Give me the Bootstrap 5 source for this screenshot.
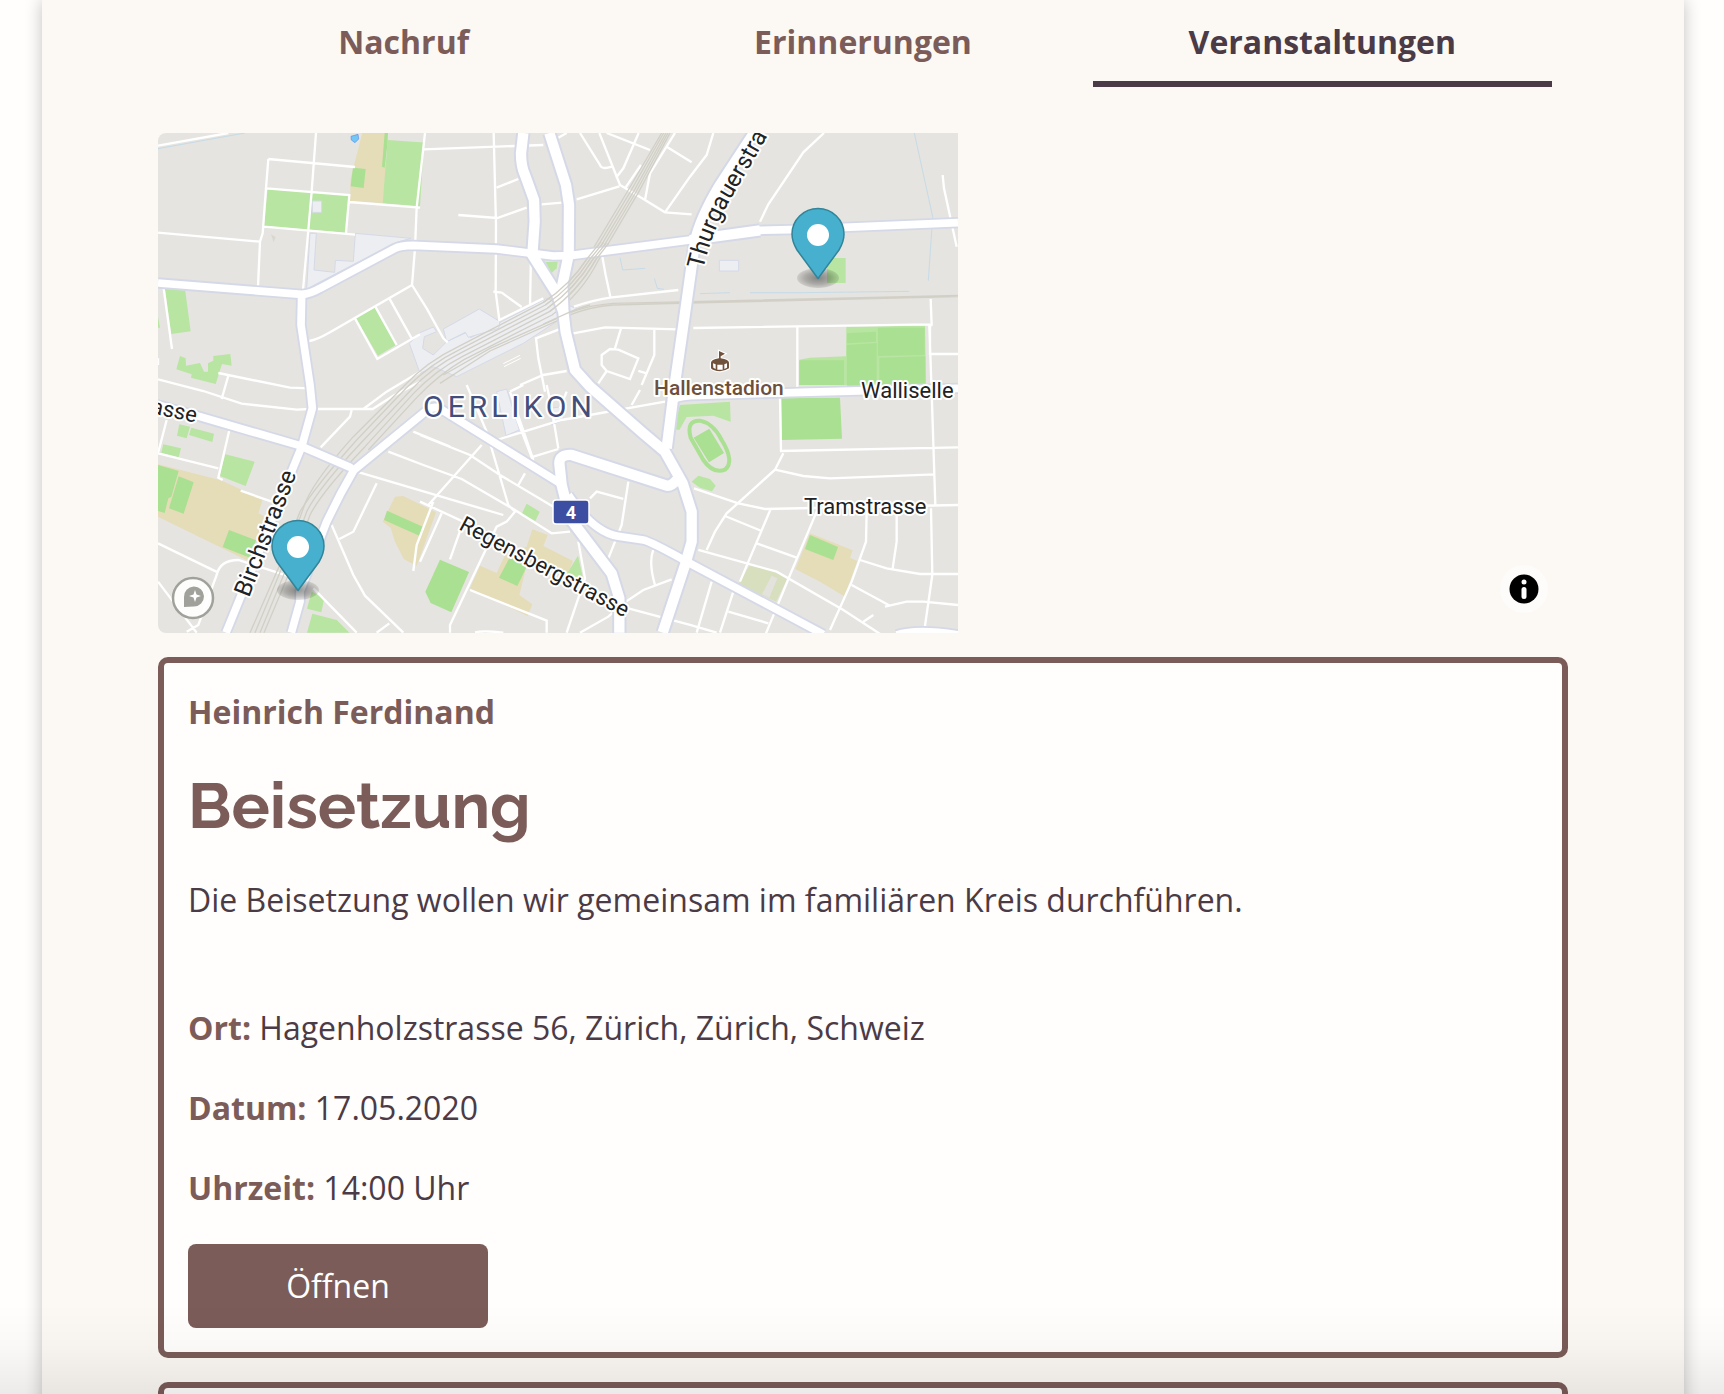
<!DOCTYPE html>
<html lang="de">
<head>
<meta charset="utf-8">
<meta name="viewport" content="width=device-width, initial-scale=1">
<title>Veranstaltungen</title>
<link rel="stylesheet" href="https://cdn.jsdelivr.net/npm/bootstrap@5.3.0/dist/css/bootstrap.min.css">
<style>
  :root { --brand: #7b5c59; --ink: #4b3b46; --paper: #fcf9f4; }
  body { font-family: "Open Sans", "Noto Sans", sans-serif; font-size: 32px; line-height: 48px; color: var(--ink); background: #fffefc; }
  .sheet { margin: 0 40px 0 42px; padding: 0 116px; background: var(--paper); box-shadow: 0 0 16px rgba(0, 0, 0, .24); }
  .tabs { margin-bottom: 46px; }
  .tabs .nav-link { padding: 18px 0 15px; border-bottom: 6px solid transparent; color: var(--brand); }
  .tabs .nav-link.active { color: var(--ink); border-color: var(--ink); }
  .map-canvas { display: block; width: 800px; max-width: 100%; border-radius: 8px 0 0 8px; }
  .map-info { right: 20px; bottom: 20px; width: 48px; height: 48px; background: #fdfcfb; }
  .event-card { margin-top: 24px; padding: 25px 24px 24px; border: 6px solid var(--brand); border-radius: 10px; background: #fffefd; }
  .event-card p { margin-bottom: 32px; }
  .event-card .intro { margin-bottom: 80px; }
  .event-card h2 { font-family: Raleway, Inter, sans-serif; font-size: 64px; font-weight: 700; line-height: 76px; margin-bottom: 32px; }
  .event-card strong, .event-card h2 { color: var(--brand); }
  .event-card strong { font-weight: 700; }
  .btn-open { width: 300px; height: 84px; font-size: 32px; color: #fff; background: var(--brand); border: 0; border-radius: 8px; }
  .btn-open:hover { background: #694c49; color: #fff; }
  .page-fade { height: 90px; pointer-events: none; background: linear-gradient(transparent, rgba(0, 0, 0, .02) 45%, rgba(0, 0, 0, .075)); }

  .lines path { fill: none; stroke: #fff; stroke-width: 7; }
  .road { fill: none; stroke: #fff; stroke-width: 23px; stroke-linejoin: round; }
  .road-wide { stroke-width: 31px; }
  .casing { stroke: #d5d9e7; stroke-width: 34px; }
  .casing.road-wide { stroke-width: 43px; }
  .rail { fill: none; stroke: #d2d0c6; stroke-width: 4; }
  .water { fill: none; stroke: #b5d7ea; stroke-width: 2; }
  .labels text { font-family: Roboto, sans-serif; font-size: 22px; fill: #222; stroke: #fff; stroke-width: 4px; stroke-linejoin: round; paint-order: stroke; }
  .labels .steep { font-size: 24px; }
  .labels .place { font-size: 30px; fill: #434e7c; letter-spacing: 4px; }
  .labels .poi { font-size: 21px; font-weight: 500; fill: #6d4f3c; }
  .labels .shield { font-size: 18px; font-weight: 700; fill: #fff; stroke: none; }
</style>
</head>
<body class="vh-100 overflow-hidden">
<main class="sheet min-vh-100">
  <nav class="tabs nav nav-justified fw-bold px-3" aria-label="Bereiche">
    <a class="nav-link" href="#nachruf">Nachruf</a>
    <a class="nav-link" href="#erinnerungen">Erinnerungen</a>
    <a class="nav-link active" href="#veranstaltungen" aria-current="page">Veranstaltungen</a>
  </nav>

  <section class="position-relative" aria-label="Karte">
    <svg class="map-canvas" viewBox="0 0 800 500" role="img" aria-label="Karte von Oerlikon">
      <defs>
        <radialGradient id="shade"><stop offset="0" stop-opacity=".42"/><stop offset=".6" stop-opacity=".26"/><stop offset="1" stop-opacity=".1"/></radialGradient>
        <g id="pin">
          <ellipse cx="0" cy="43" rx="21" ry="10" fill="url(#shade)"/>
          <path d="M0 43.500L-21 15C-24.500 9-26 5-26-1A26 25.500 0 0 1 26-1C26 5 24.500 9 21 15Z" fill="#46b0ce" stroke="#328498" stroke-width="1.500" stroke-linejoin="round"/>
          <circle r="11" fill="#fff"/>
        </g>
        <path id="thurgauer" d="M545 137C551 110 560 88 575 62Q592 34 612 -2L625 -25"/>
        <g id="roads">
          <path d="M24 474 455 508Q480 508 510 490L735 370Q750 362 790 361L1040 372 1210 393 1260 392 1620 345 1830 316 1920 314 2424 293"/>
          <path d="M455 508 453 600 480 780 487 850 455 965 228 1523"/>
          <path stroke-linecap="round" d="M24 840 140 872 450 962 600 1027"/>
          <path d="M424 1523 450 1430V1400L530 1190 570 1110 612 1035 820 865Q850 835 880 857L1230 1075"/>
          <path d="M1255 1110Q1330 1222 1405 1234L1480 1245Q1500 1248 1620 1315L2020 1528"/>
          <path d="M1560 830Q1575 815 1620 812L1950 802 2424 790M2240 1530Q2300 1510 2424 1530"/>
        </g>
        <g id="roads-wide">
          <path d="M1120 24 1113 85Q1113 125 1125 150L1152 225 1154 290 1147 390 1220 505 1240 560 1247 620 1275 735 1320 785 1480 925 1545 980 1598 1075 1625 1160V1250L1605 1320 1538 1523"/>
          <path d="M1198 24 1248 180 1257 240 1256 390 1237 480 1240 560"/>
          <path d="M1812 24 1710 180Q1650 280 1635 350L1600 600 1574 780 1550 970"/>
          <path d="M1408 1523V1420L1385 1345 1260 1180 1235 1080 1228 1015Q1228 988 1265 990L1550 1082Q1565 1084 1585 1060"/>
          <path d="M1620 345 1830 316"/>
        </g>
      </defs>
      <rect width="800" height="500" fill="#e5e4e0"/>
      <g transform="scale(.33333) translate(-24 -24)">
        <!-- schools and sports grounds -->
        <g fill="#e5dcb8">
          <path d="M637 24H705L708 130 698 235 600 228 602 160Z"/>
          <path d="M24 1018 210 1065 338 1123 325 1165 345 1175 300 1310 24 1175Z"/>
          <path d="M735 1115 760 1113 858 1162 800 1322 762 1303 735 1250 722 1208 698 1190Z"/>
          <path d="M1147 1213 1193 1230 1180 1263 1269 1308 1250 1355 1130 1320 1108 1410 1147 1438 1133 1473 960 1390 990 1322 1040 1344 1065 1290 1130 1265Z"/>
          <path d="M1980 1225 2108 1276 2100 1298 2122 1308 2083 1414 2010 1370 1936 1332Z"/>
        </g>
        <path fill="#d8dfbf" d="M1798 1322 1880 1340 1912 1362 1878 1430 1765 1378Z"/>
        <path fill="#e3e2dd" d="M1865 1352 1882 1360 1858 1418 1836 1408Z"/>
        <g fill="#b8e5a1">
          <path d="M353 190 598 210 588 323 342 303Z"/><path d="M713 45 810 52 822 52 810 244 698 235Z"/>
          <path d="M45 492H105L122 619 64 627ZM24 575 30 608H24Z"/>
          <path d="M90 693 107 700 108 722 150 714 162 740H174V715L190 707V693L241 687 245 722 216 717 197 777 123 758 125 748 79 733Z"/>
          <path d="M618 580 676 547 738 660 684 692Z"/>
          <path d="M2031 399H2087V474H2031Z"/>
          <path d="M88 898 120 905 110 940 81 932ZM124 908 192 926 187 951 117 930ZM40 958 93 970 86 997 34 983Z"/>
          <path d="M226 988 314 1010 287 1083 208 1052Z"/>
          <path d="M1130 1136 1169 1160 1156 1188 1115 1167ZM1284 1292 1300 1364 1250 1348Z"/>
          <path d="M485 1400 523 1418 514 1462 471 1451ZM487 1466 560 1485 598 1523H471Z"/>
          <path d="M1590 840 1740 830 1742 890 1690 872 1610 876 1588 915 1570 912Z"/>
          <path d="M1625 1070 1645 1052 1680 1062 1697 1082 1686 1099 1650 1088Z"/>
          <path d="M1980 698 2088 694 2089 605 2325 602 2328 780H1948V704Z"/>
        </g>
        <g fill="#aae091">
          <path d="M609 128 647 132 641 189 602 184ZM704 24H714L712 60 704 128 696 125Z"/>
          <path d="M24 1020 86 1038 64 1115 55 1120 44 1164 24 1158ZM86 1054 131 1072 101 1166 57 1150ZM237 1215 318 1246 300 1298 218 1266Z"/>
          <path d="M711 1157 820 1206 808 1232 702 1185ZM870 1304 957 1341 904 1462 842 1434 826 1400Z"/>
          <path d="M1083 1290 1130 1325 1102 1383 1047 1358ZM1980 1230 2064 1266 2050 1305 1965 1272Z"/>
          <path d="M1948 706H2082V780H1948ZM2091 625 2178 620V650L2091 655ZM2184 608H2324V690L2184 693ZM2091 660 2180 654V790H2091ZM2188 698 2326 694V778H2188Z"/>
          <path d="M1894 820 2070 818 2076 941 1896 945ZM1631 938 1678 911 1722 984 1677 1012Z"/>
        </g>
        <path d="M1622 938Q1608 885 1650 887 1690 895 1715 945 1755 1010 1725 1034 1690 1048 1660 1005Z" fill="none" stroke="#aae091" stroke-width="12"/>
        <!-- buildings -->
        <g fill="#eceef2" stroke="#d5d9e7" stroke-width="3">
          <path d="M480 325H499L492 435 554 442 556 406 610 409 616 325 783 340 740 352 470 492Z"/>
          <path d="M487 228H515V262H487Z"/>
          <path d="M810 623 850 606 860 620 823 635 818 670 850 690 880 660 890 650 950 622 962 638 1190 520 1280 550 1120 655 920 755 850 725 810 745 778 655Z"/>
          <path d="M880 612 988 552 1050 590 1046 610 955 637 946 622 890 650Z"/>
          <path d="M1708 406H1766V438H1708Z"/><path d="M1040 800 1070 792 1108 915 1068 932ZM1200 850 1235 845 1240 885 1205 900Z"/>
        </g>
        <path d="M603 34 624 28 626 42 615 53 604 45Z" fill="#70c8f3" stroke="#5b8df0" stroke-width="2"/>
        <path d="M363 328 377 336 371 352Z" fill="#d9d8d0"/>
        <g class="water">
          <path d="M24 71 285 24M2293 24 2348 275 2335 467M1650 506 1740 503M1800 503H1960L2278 499M1410 398 1418 435 1485 430M1513 460 1522 490 1542 493"/>
        </g>
        <g class="lines">
          <path d="M24 62 235 24M498 24 485 200 475 315 459 495M355 102 615 126M355 102 348 190 338 325 330 350 324 485M348 190 598 210 588 323M342 305 615 329M24 323 330 350M597 231 810 248M825 24 800 248 795 370 786 480 540 622Q500 645 478 648M786 480 830 550 880 640 893 652M41 490 66 672M615 580 682 702 810 628M676 545 740 660M718 520 785 640"/>
          <path d="M24 763 160 798 275 836 440 854 480 852H668L730 812 810 770M205 744 420 788 480 790M235 752 215 822M24 720V700M640 852 710 800 810 740"/>
          <path d="M820 73 1180 60M1031 24 1038 300 1037 500 1048 585 1180 520M1040 188 1105 162M925 270 1042 279 1130 248M1175 238 1245 232M1280 223 1408 184M1030 500 1055 503 1115 546M1143 390 1140 540M1225 38 1250 24M1290 24 1350 120Q1355 135 1385 125M1348 24 1410 180 1485 225 1545 262 1625 268M1370 24 1500 75M1466 24 1420 130 1398 158M1473 120 1425 190M1575 24 1500 145 1485 225M1550 65 1625 112M1545 262 1620 155 1670 90 1690 24M1357 395 1367 450 1381 515M1272 545Q1330 525 1380 518L1585 495M1270 625 1365 607 1585 613M1413 610 1395 670M1513 615V690L1475 780M1355 690 1380 672 1405 674 1465 700 1440 762 1370 738 1355 720ZM1465 738 1490 745M1370 738 1345 775M1235 610 1158 640 1165 700 1185 800M1110 780 1180 750 1250 738"/>
          <path d="M2022 24 1960 82 1855 238 1830 290M2378 150 2382 190 2420 365M1630 609 2340 598V690M2342 522 2345 600 2338 605 2345 800 2356 1140M2340 687H2424M1942 605V800M1890 820 1893 980M1890 978 2424 967M1900 985 1875 1034 1730 1165 1695 1220 1670 1275M1875 1034 1960 1053 2040 1060 2356 1048M1632 1090 1765 1135 1845 1152 2424 1140M1725 1173 1835 1218M1862 1152 1770 1370M1820 1255 1940 1298M2000 1160 1920 1350 1848 1525M1645 1275 1880 1340 2080 1455 2195 1530M2150 1160 2148 1250 2105 1370 2040 1515M2240 1160V1250L2228 1330M2130 1305 2210 1330 2310 1347H2424M2343 1150 2347 1350 2325 1503M2105 1380 2220 1442M2205 1445 2270 1430 2320 1430 2424 1440M2140 1490 2170 1470M1685 1370 1640 1523M1750 1400 1710 1523M1735 1460 1855 1495"/>
          <path d="M50 885 24 985 205 1030M238 915 205 1058 218 1065M272 1097 365 1130M605 855 600 875 512 967M620 1040 1060 1170M680 1075 610 1220 568 1242M545 1200 610 1350 645 1412 760 1523M718 1495 680 1523M490 1390 620 1523M24 1255 205 1343M24 1370 140 1523M110 1520 145 1500 200 1350Q210 1305 265 1305L420 1355M790 920 900 965M715 980 820 1020 935 1062 1090 1152 1205 1225 1260 1220M850 1130 800 1260 790 1338M810 930 960 990 1050 1050 1210 1145M995 960 835 1140M950 780 1010 920 1075 1140 1095 1160 1070 1190 1040 1205 900 1500V1523M875 1165 810 1310M810 1130 940 1190 900 1303M1100 880 1150 1010M1040 945 1235 885 1545 830M1190 780 1205 850 1225 970M1150 995 1225 972M1125 1045 1105 1080M1080 800 1150 1005M1470 795 1445 840M960 1395 1190 1487V1523M975 1522Q1000 1516 1060 1523M1285 1250 1305 1360 1250 1523M1320 1120 1340 1100 1420 1122M1435 1070 1415 1200 1375 1300M1510 1275Q1495 1310 1515 1380M1565 1363 1480 1395 1420 1435 1375 1475 1290 1523M1435 1450 1620 1500 1700 1523M1250 800 1230 850M1080 800 1120 780"/>
        </g>
        <path d="M1060 716 1110 691M1062 725 1112 700" fill="none" stroke="#fff" stroke-width="3"/>
        <g class="rail">
          <path d="M1535 24 1435 195 1312 400Q1260 480 1180 532L925 665Q830 710 760 785L610 935Q480 1080 460 1150L395 1330 315 1523"/>
          <path d="M1541 24 1443 197 1320 402Q1268 485 1186 540L930 673Q838 718 768 790L620 945Q495 1085 450 1160L385 1330 300 1523"/>
          <path d="M1548 24 1451 199 1328 404Q1276 490 1192 550L934 683Q846 726 780 798L632 955Q505 1090 470 1160L405 1340 330 1523"/>
          <path d="M1554 24 1458 201 1336 406Q1286 496 1198 560L938 694Q856 736 790 806L645 965Q515 1100 480 1170L415 1350 342 1523"/>
          <path d="M1560 24 1465 203 1344 408Q1296 504 1206 570L942 704Q864 750 800 818L655 975"/>
          <path d="M2424 511 1620 530 1390 535Q1320 540 1262 562L1020 670 880 750M2424 515 1620 534 1390 540Q1320 546 1264 568L1020 678 870 775"/>
        </g>
        <!-- main roads: casing below, surface above -->
        <use href="#roads" class="road casing"/>
        <use href="#roads-wide" class="road road-wide casing"/>
        <use href="#roads" class="road"/>
        <use href="#roads-wide" class="road road-wide"/>
        <path d="M1187 411H1223L1220 430 1205 443Z" fill="#b8e5a1"/>
        <!-- tracks crossing over the roads -->
        <g class="rail">
          <path d="M1353 350 1312 400Q1260 480 1180 532M1361 352 1320 402Q1268 485 1186 540M1369 354 1328 404Q1276 490 1192 550M1375 356 1336 406Q1286 496 1198 560M1320 540Q1290 548 1262 560L1180 597"/>
        </g>
        <path d="M1707 678 1725 686 1712 694V700Q1737 704 1737 713V730Q1725 738 1710 739 1690 738 1683 730V713Q1683 704 1707 700Z" fill="#70513b" stroke="#fff" stroke-width="7" paint-order="stroke"/>
        <path d="M1689 715 1697 718V732L1690 728ZM1702 719H1718V734H1702ZM1723 718 1731 715V728L1723 732Z" fill="#fff"/>
      </g>
      <g class="labels">
        <text class="place" x="265" y="284">OERLIKON</text>
        <text class="steep"><textPath href="#thurgauer">Thurgauerstra</textPath></text>
        <text x="703" y="265">Walliselle</text>
        <text x="646" y="381">Tramstrasse</text>
        <text transform="translate(-8 280) rotate(12)">asse</text>
        <text class="steep" transform="translate(91 465) rotate(-69)">Birchstrasse</text>
        <text transform="translate(300 396) rotate(28)">Regensbergstrasse</text>
        <text class="poi" x="496" y="262">Hallenstadion</text>
        <rect x="395" y="367" width="36" height="24" rx="3" fill="#3c4ea1" stroke="#fff" stroke-width="1.500"/>
        <text class="shield" x="413" y="386" text-anchor="middle">4</text>
      </g>
      <use href="#pin" x="660" y="102"/>
      <use href="#pin" x="140" y="414"/>
      <circle cx="35" cy="465" r="20" fill="#fff" fill-opacity=".9" stroke="#a1a19c" stroke-width="2.500"/>
      <path d="M26 474V464A10 10 0 1 1 36 473.500Z" fill="#a1a19c"/>
      <path d="M37 457 38.500 461.500 43 463 38.500 464.500 37 469 35.500 464.500 31 463 35.500 461.500Z" fill="#fff"/>
    </svg>
    <button type="button" class="map-info btn p-0 border-0 rounded-circle position-absolute d-flex align-items-center justify-content-center" aria-label="Karteninformationen">
      <svg width="30" height="30" viewBox="0 0 30 30" aria-hidden="true"><circle cx="15" cy="15" r="14.500"/><circle cx="15" cy="8" r="2.500" fill="#fff"/><rect x="12.500" y="13" width="5" height="12" rx="2.500" fill="#fff"/></svg>
    </button>
  </section>

  <article class="event-card">
    <p><strong>Heinrich Ferdinand</strong></p>
    <h2>Beisetzung</h2>
    <p class="intro">Die Beisetzung wollen wir gemeinsam im familiären Kreis durchführen.</p>
    <p><strong>Ort:</strong> Hagenholzstrasse 56, Zürich, Zürich, Schweiz</p>
    <p><strong>Datum:</strong> 17.05.2020</p>
    <p><strong>Uhrzeit:</strong> 14:00 Uhr</p>
    <button type="button" class="btn btn-open">Öffnen</button>
  </article>
  <article class="event-card"></article>
</main>
<div class="page-fade fixed-bottom"></div>
<script src="https://cdn.jsdelivr.net/npm/bootstrap@5.3.0/dist/js/bootstrap.bundle.min.js"></script>
</body>
</html>
